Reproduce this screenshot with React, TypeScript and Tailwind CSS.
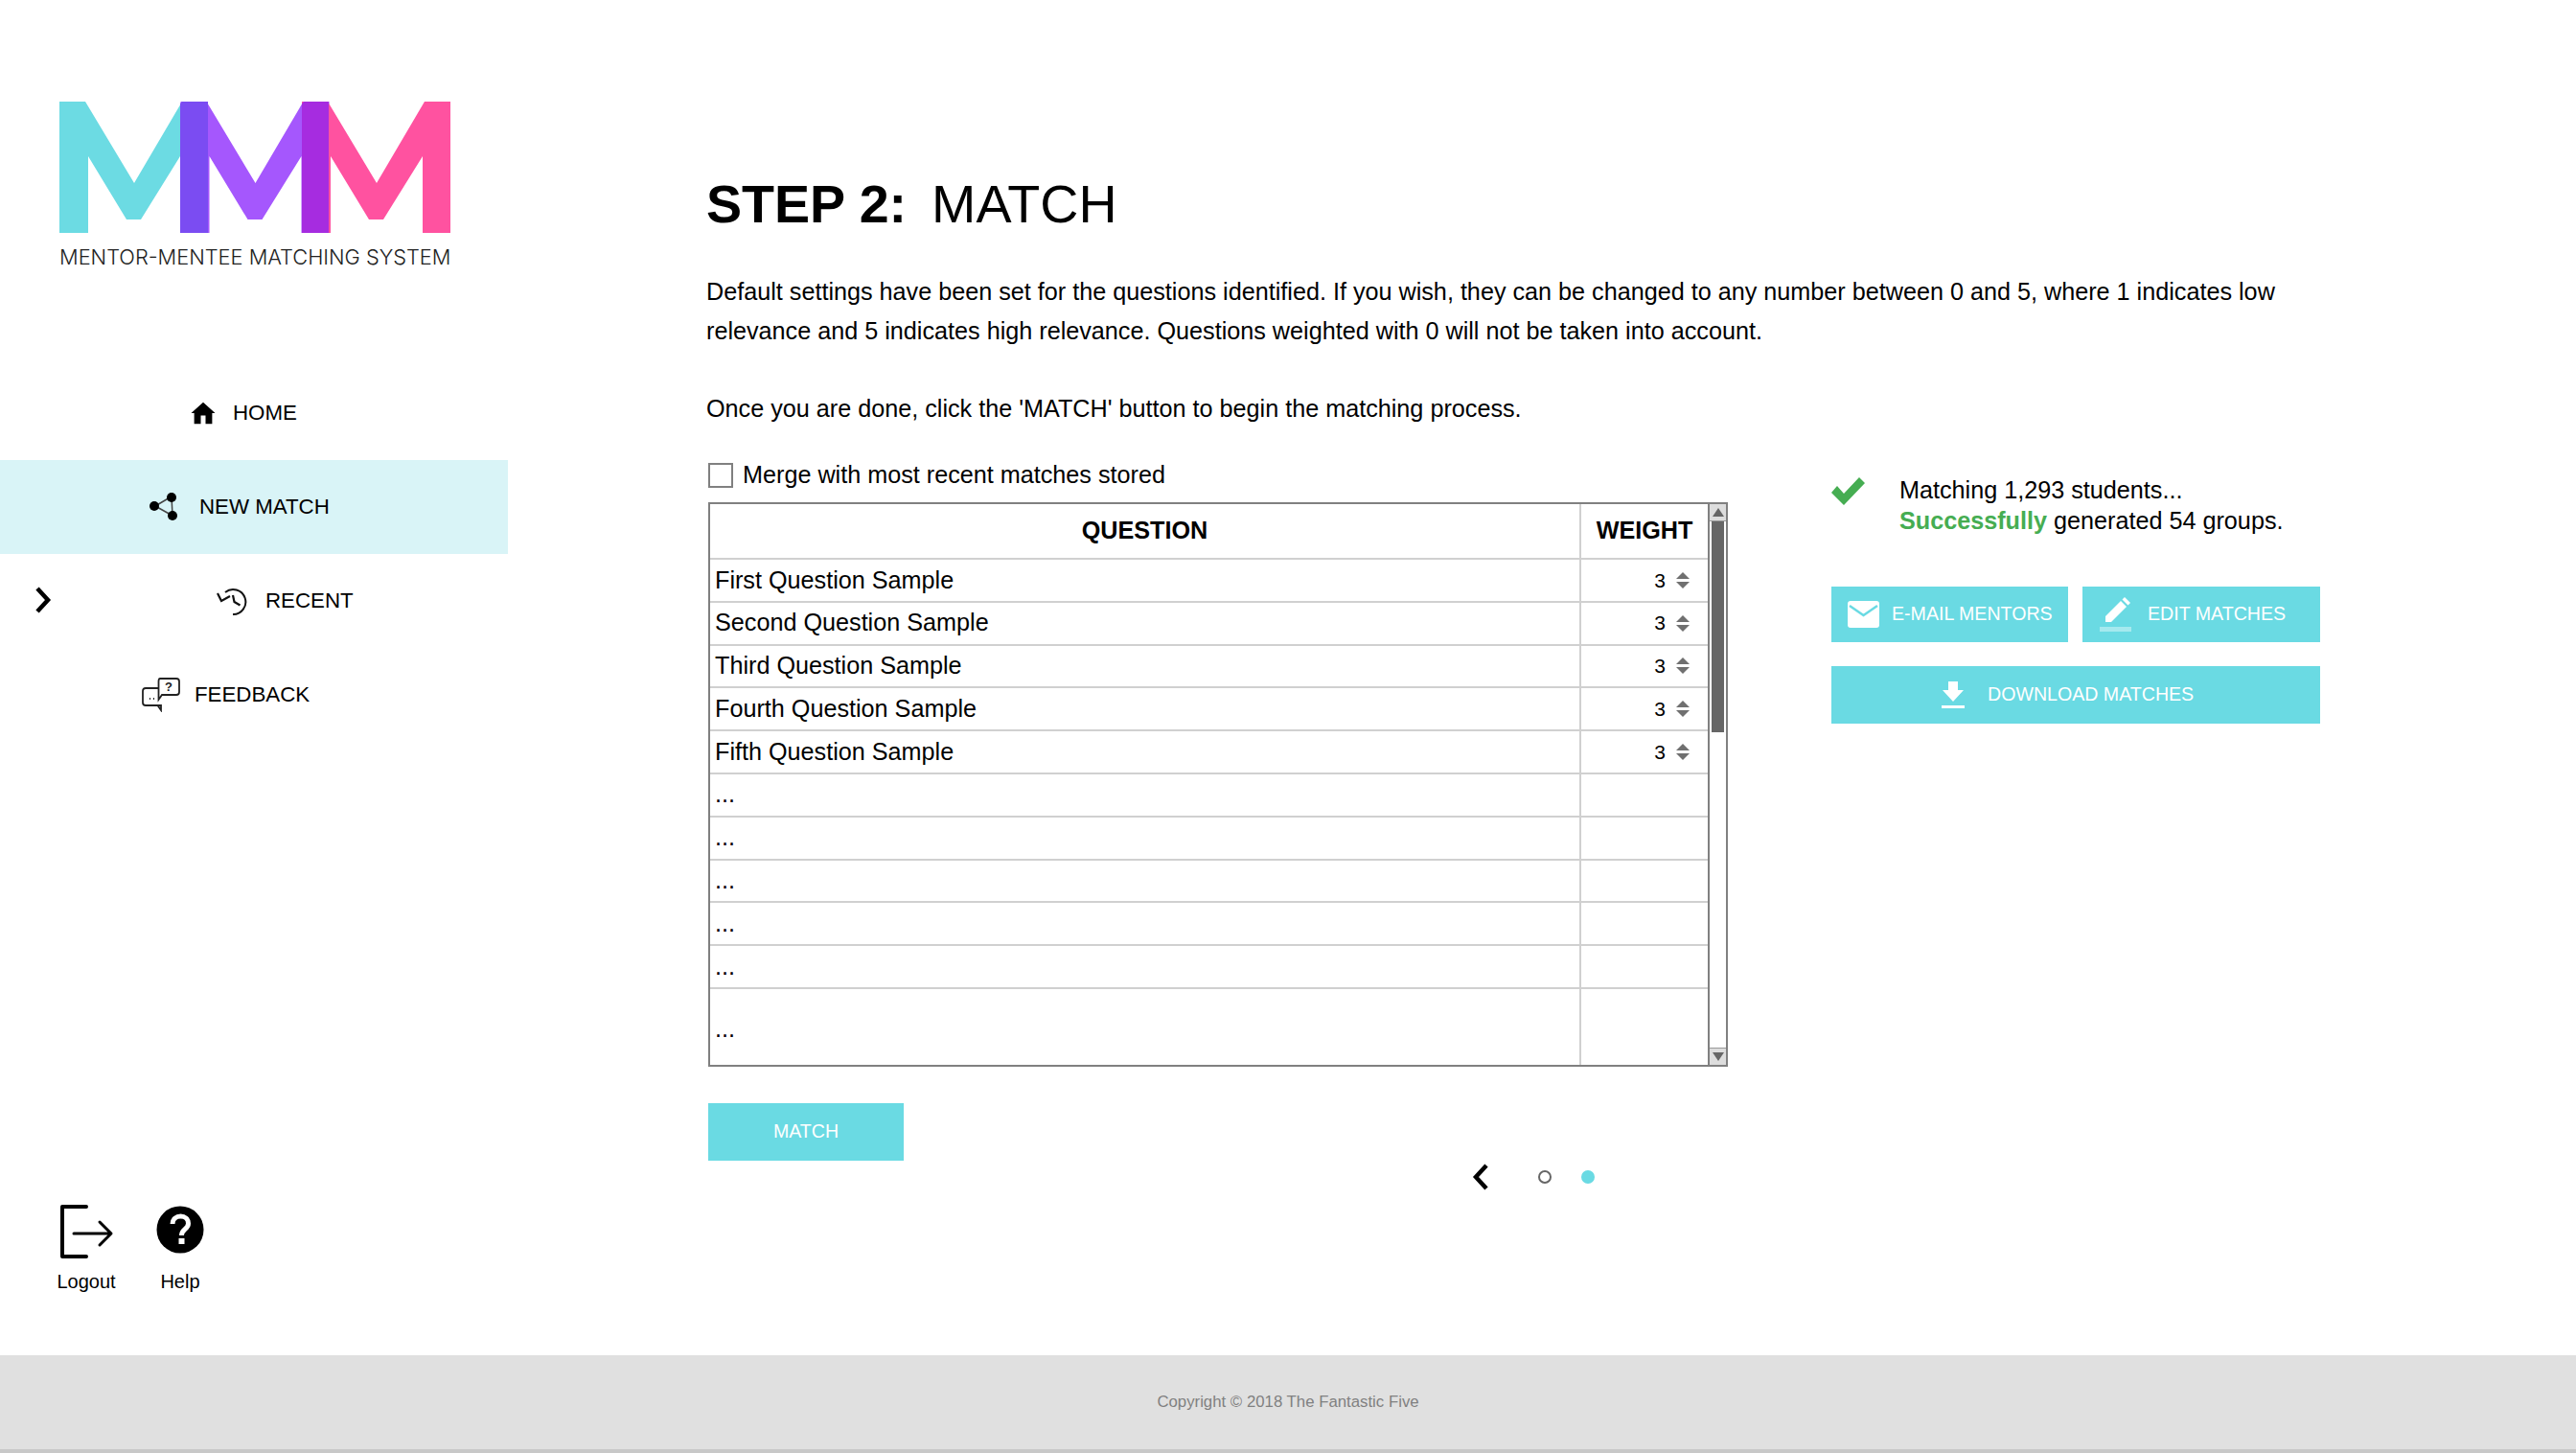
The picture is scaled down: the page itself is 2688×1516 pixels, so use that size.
import { Fragment } from 'react';

const CYAN = 'bg-[#6adae3]';

const questions = [
  'First Question Sample',
  'Second Question Sample',
  'Third Question Sample',
  'Fourth Question Sample',
  'Fifth Question Sample',
];

function Logo() {
  const m = '0,137 0,0 27,0 78,85 128,0 155,0 155,137 126,137 126,57 85,123 70,123 30,57 30,137';
  return (
    <div className="w-[408px]">
      <svg width="408" height="137" viewBox="0 0 408 137" className="block">
        <polygon points={m} fill="#6cdbe3" />
        <polygon points={m} fill="#a557fd" transform="translate(126.5 0)" />
        <polygon points={m} fill="#ff52a0" transform="translate(253 0)" />
        <polygon points="126,137 126,2 128,0 155,0 155,137" fill="#7b4cf2" />
        <polygon points="253,137 253,2 255,0 281,0 281,137" fill="#a62ce0" />
      </svg>
      <div className="mt-[15px] text-center text-[21.8px] leading-[20px] font-light text-[#222] whitespace-nowrap font-['Inter',sans-serif]">
        MENTOR-MENTEE MATCHING SYSTEM
      </div>
    </div>
  );
}

function HomeIcon() {
  return (
    <svg width="30" height="30" viewBox="0 0 24 24" fill="black">
      <path d="M10 21v-7h4v7h5.500v-9H22L12 3 2 12h2.500v9z" />
    </svg>
  );
}

function ShareIcon() {
  return (
    <svg width="32" height="30" viewBox="0 0 32 30" fill="black">
      <path d="M7 14 24 4M7 14l18 10M24 4l1 20" stroke="#444" strokeWidth="1.500" />
      <circle cx="6" cy="14" r="5" />
      <circle cx="24" cy="5" r="5" />
      <circle cx="25" cy="24" r="5" />
    </svg>
  );
}

function RecentIcon() {
  return (
    <svg width="33" height="32" viewBox="0 0 33 32" fill="none" stroke="#111" strokeWidth="2">
      <path d="M9 7A13 13 0 1 1 17 30" />
      <path d="M1 8l4 8 9-5" strokeWidth="2.200" />
      <path d="M17 10l1.500 7 6 3.500" strokeWidth="2.200" />
    </svg>
  );
}

function FeedbackIcon() {
  return (
    <svg width="40" height="36" viewBox="0 0 40 36" fill="none" stroke="#222" strokeWidth="1.800">
      <path d="M17 11H4q-3 0-3 3v12q0 3 3 3h16v5l-3.500-5" />
      <path d="M19 1h17q3 0 3 3v11q0 3-3 3H21l-3.500 5V4q0-3 1.500-3z" fill="white" />
      <text x="28" y="14" fontSize="13" fontWeight="700" fill="#222" stroke="none" textAnchor="middle" fontFamily="Liberation Sans, sans-serif">?</text>
      <path d="M8 22h1M12 22h1" />
    </svg>
  );
}

function Chevron({ left }: { left?: boolean }) {
  return (
    <svg width="18" height="28" viewBox="0 0 18 28" fill="none" stroke="black" strokeWidth="4.500">
      <path d={left ? 'M15 2 4 14l11 12' : 'M3 2l11 12L3 26'} />
    </svg>
  );
}

function NavRow({ icon, label, pad, active, chevron }: { icon: React.ReactNode; label: string; pad: string; active?: boolean; chevron?: boolean }) {
  return (
    <div className={`relative flex h-[98px] w-[530px] items-center text-[22.3px] ${pad} ${active ? 'bg-[#d9f4f7]' : ''}`}>
      {chevron && (
        <div className="absolute left-[36px] top-[34px]">
          <Chevron />
        </div>
      )}
      {icon}
      <span className="whitespace-nowrap">{label}</span>
    </div>
  );
}

function Spinner() {
  return (
    <svg width="14" height="17" viewBox="0 0 14 17" fill="#707070">
      <polygon points="7,0 14,7 0,7" />
      <polygon points="0,10 14,10 7,17" />
    </svg>
  );
}

function ActionButton({ icon, label, className }: { icon: React.ReactNode; label: string; className: string }) {
  return (
    <button className={`flex items-center text-[19.6px] text-white ${CYAN} ${className}`}>
      {icon}
      <span className="whitespace-nowrap">{label}</span>
    </button>
  );
}

function Scrollbar() {
  return (
    <div className="flex w-[19px] flex-col border-y-2 border-r-2 border-[#808080]">
      <div className="flex h-[18px] items-center justify-center border-b border-[#999] bg-[#ddd]">
        <div className="h-0 w-0 border-x-[6px] border-b-[9px] border-x-transparent border-b-[#666]" />
      </div>
      <div className="flex-1 px-[2px]">
        <div className="h-[220px] bg-[#666]" />
      </div>
      <div className="flex h-[18px] items-center justify-center border-t border-[#999] bg-[#ddd]">
        <div className="h-0 w-0 border-x-[6px] border-t-[9px] border-x-transparent border-t-[#666]" />
      </div>
    </div>
  );
}

function QuestionTable() {
  const rows = [...questions, '...', '...', '...', '...', '...'];
  return (
    <div className="flex h-[589px] w-[1064px] text-[25.2px]">
      <div className="grid w-[1045px] grid-cols-[907px_1fr] grid-rows-[58px_repeat(10,44.8px)_1fr] border-2 border-[#808080]">
        <div className="flex items-center justify-center border-b-2 border-[#d0d0d0] font-bold">QUESTION</div>
        <div className="flex items-center justify-center border-b-2 border-l-2 border-[#d0d0d0] font-bold">WEIGHT</div>
        {rows.map((q, i) => (
          <Fragment key={i}>
            <div className="flex items-center border-b-2 border-[#d0d0d0] pl-[5px]">{q}</div>
            <div className="flex items-center justify-end gap-[11px] border-b-2 border-l-2 border-[#d0d0d0] pr-[19px]">
              {i < 5 && (
                <>
                  <span className="text-[21px]">3</span>
                  <Spinner />
                </>
              )}
            </div>
          </Fragment>
        ))}
        <div className="flex items-center pl-[5px] pt-[4px]">...</div>
        <div className="border-l-2 border-[#d0d0d0]" />
      </div>
      <Scrollbar />
    </div>
  );
}

export default function App() {
  return (
    <div className="flex min-h-screen flex-col bg-white text-black font-['Liberation_Sans',Arial,sans-serif]">
      <div className="flex flex-1">
        <aside className="flex w-[530px] shrink-0 flex-col">
          <div className="pl-[62px] pt-[106px]">
            <Logo />
          </div>
          <nav className="mt-[104px]">
            <NavRow pad="pl-[197px] gap-[16px]" icon={<HomeIcon />} label="HOME" />
            <NavRow pad="pl-[155px] gap-[21px]" active icon={<ShareIcon />} label="NEW MATCH" />
            <NavRow chevron pad="pl-[226px] gap-[18px]" icon={<RecentIcon />} label="RECENT" />
            <NavRow pad="pl-[148px] gap-[15px]" icon={<FeedbackIcon />} label="FEEDBACK" />
          </nav>
          <div className="mt-[482px] flex pl-[58px] text-[20px]">
            <div className="flex w-[64px] flex-col items-center">
              <svg width="60" height="58" viewBox="0 0 60 58" fill="none" stroke="black">
                <path d="M30 3H5v52h25" strokeWidth="4" strokeLinecap="round" strokeLinejoin="round" />
                <path d="M17 31h38M44 19l12 12-12 12" strokeWidth="3" strokeLinecap="round" strokeLinejoin="round" />
              </svg>
              <span className="mt-[11px] leading-[24px]">Logout</span>
            </div>
            <div className="ml-[34px] flex w-[64px] flex-col items-center">
              <svg width="50" height="50" viewBox="0 0 50 50" className="mt-[2px]">
                <circle cx="25" cy="25" r="24.500" fill="black" />
                <path d="M17 19c0-5 4-8 8.500-8s8 3 8 7.500c0 6-7 6-7 12.500" fill="none" stroke="white" strokeWidth="5" />
                <rect x="23.500" y="34" width="6" height="6" fill="white" />
              </svg>
              <span className="mt-[17px] leading-[24px]">Help</span>
            </div>
          </div>
        </aside>

        <main className="flex-1 pl-[207px] pr-[260px]">
          <h1 className="mt-[179px] text-[55.6px] leading-[68px]">
            <span className="font-bold">STEP 2:</span>
            <span className="ml-[26px]">MATCH</span>
          </h1>
          <p className="mt-[37px] text-[25.2px] leading-[41px]">
            Default settings have been set for the questions identified. If you wish, they can be changed to any number between 0 and 5, where 1 indicates low relevance and 5 indicates high relevance. Questions weighted with 0 will not be taken into account.
          </p>
          <p className="mt-[40px] text-[25.2px] leading-[41px]">
            Once you are done, click the &apos;MATCH&apos; button to begin the matching process.
          </p>

          <div className="flex">
            <div className="w-[1174px] shrink-0 pl-[2px]">
              <label className="mb-[3px] mt-[24px] flex h-[50px] items-center gap-[10px] text-[25.2px]">
                <span className="h-[26px] w-[26px] border-2 border-[#808080]" />
                Merge with most recent matches stored
              </label>
              <QuestionTable />
              <div className="mt-[38px] flex">
                <button className={`h-[60px] w-[204px] text-[19.6px] text-white ${CYAN}`}>MATCH</button>
                <div className="ml-[593px] mt-[63px] flex h-[28px] items-center">
                  <Chevron left />
                  <span className="ml-[51px] h-[14px] w-[14px] rounded-full border-2 border-[#666]" />
                  <span className="ml-[31px] h-[14px] w-[14px] rounded-full bg-[#6adae3]" />
                </div>
              </div>
            </div>

            <div className="w-[510px] shrink-0">
              <div className="mt-[46px] flex">
                <svg width="36" height="30" viewBox="0 0 36 30" fill="#46ad52" className="mt-[5px]">
                  <polygon points="0,16 6,9 13,17 29,0 35,6 13,29" />
                </svg>
                <div className="ml-[35px] mt-[2px] text-[25.2px] leading-[32px] whitespace-nowrap">
                  <div>Matching 1,293 students...</div>
                  <div>
                    <span className="font-bold text-[#46ad52]">Successfully</span> generated 54 groups.
                  </div>
                </div>
              </div>
              <div className="mt-[53px] flex gap-[15px]">
                <ActionButton
                  className="h-[58px] w-[247px] gap-[13px] pl-[17px]"
                  label="E-MAIL MENTORS"
                  icon={
                    <svg width="33" height="28" viewBox="0 0 33 28">
                      <rect width="33" height="28" rx="3" fill="white" />
                      <path d="M2 5l14.500 10L31 5" fill="none" stroke="#6adae3" strokeWidth="2.500" />
                    </svg>
                  }
                />
                <ActionButton
                  className="h-[58px] w-[248px] gap-[17px] pl-[18px]"
                  label="EDIT MATCHES"
                  icon={
                    <svg width="33" height="36" viewBox="0 0 33 36" fill="white">
                      <path d="M6 26v-6L22 4l6 6-16 16z" />
                      <path d="M23.500 2.500 26 0l6 6-2.500 2.500z" />
                      <rect y="31" width="33" height="5" fill="#a5e9ee" />
                    </svg>
                  }
                />
              </div>
              <ActionButton
                className="mt-[25px] h-[60px] w-[510px] gap-[24px] pl-[115px]"
                label="DOWNLOAD MATCHES"
                icon={
                  <svg width="24" height="28" viewBox="0 0 24 28" fill="white">
                    <path d="M7 0h10v9h6L12 21 1 9h6z" />
                    <rect y="25" width="24" height="3" />
                  </svg>
                }
              />
            </div>
          </div>
        </main>
      </div>

      <footer className="flex h-[102px] items-center justify-center border-b-4 border-[#c8c8c8] bg-[#e0e0e0] text-[16.8px] text-[#808080]">
        Copyright © 2018 The Fantastic Five
      </footer>
    </div>
  );
}
